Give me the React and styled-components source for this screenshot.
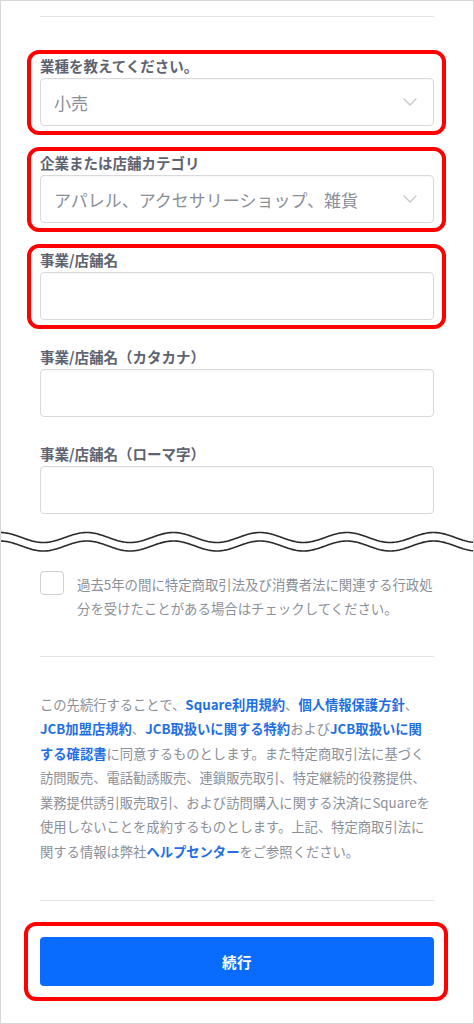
import React from "react";
import styled, { createGlobalStyle, css } from "styled-components";

const GlobalStyle = createGlobalStyle`
  html, body { margin: 0; padding: 0; background: #ffffff; }
  body {
    font-family: "Noto Sans CJK JP", "Noto Sans", "Liberation Sans", sans-serif;
    -webkit-font-smoothing: antialiased;
    text-autospace: no-autospace;
  }
  * { box-sizing: border-box; }
`;

const Frame = styled.div`
  width: 474px;
  height: 1024px;
  border: 1px solid #d6d6d6;
  padding: 0 39px;
  background: #fff;
  overflow: hidden;
  display: flex;
  flex-direction: column;
`;

const Divider = styled.hr`
  border: 0;
  height: 1px;
  background: #e3e3e6;
  margin: ${(p) => p.$mt}px 0 ${(p) => p.$mb}px;
`;

const Fields = styled.div`
  display: flex;
  flex-direction: column;
  gap: 27px;
`;

const highlight = css`
  &::after {
    content: "";
    position: absolute;
    pointer-events: none;
    border: 4px solid #ff0000;
    border-radius: 12px;
  }
`;

const Field = styled.div`
  position: relative;
  display: flex;
  flex-direction: column;
  gap: 2px;
  ${(p) =>
    p.$highlighted &&
    css`
      ${highlight}
      &::after {
        top: -6.5px;
        bottom: -9px;
        left: -13px;
        right: -12px;
      }
    `}
`;

const Label = styled.label`
  font-size: 14.5px;
  line-height: 20px;
  font-weight: 700;
  color: #5d6371;
  white-space: nowrap;
`;

const Box = styled.div`
  height: 48px;
  border: 1px solid #d9d9dc;
  border-radius: 4px;
  background: #fff;
  display: flex;
  align-items: center;
  justify-content: space-between;
  padding: 0 16px 0 13px;
  box-shadow: inset 0 1px 1px rgba(0, 0, 0, 0.03);
`;

const Value = styled.span`
  font-size: 17px;
  color: #8a8e97;
  white-space: nowrap;
`;

const Chevron = () => (
  <svg width="14" height="8" viewBox="0 0 14 8" fill="none">
    <polyline points="1,1 7,7 13,1" stroke="#c3c6cc" strokeWidth="1.3" strokeLinecap="round" strokeLinejoin="round" />
  </svg>
);

const WaveWrap = styled.div`
  margin: 11px -40px 0;
  height: 32px;
  position: relative;
  z-index: 1;
  svg { display: block; }
`;

function wavePoints(cy, amp, period, width, step) {
  const pts = [];
  for (let x = 0; x <= width; x += step) {
    pts.push([x, cy - amp * Math.cos((2 * Math.PI * x) / period)]);
  }
  return pts;
}

const Wave = () => {
  const w = 474;
  const top = wavePoints(12.5, 5, 86.7, w, 1);
  const bot = wavePoints(21, 5, 86.7, w, 1);
  const toD = (pts) => pts.map((p, i) => `${i ? "L" : "M"}${p[0].toFixed(1)} ${p[1].toFixed(2)}`).join(" ");
  const band =
    toD(top) +
    " " +
    bot
      .slice()
      .reverse()
      .map((p) => `L${p[0].toFixed(1)} ${p[1].toFixed(2)}`)
      .join(" ") +
    " Z";
  return (
    <svg width={w} height="32" viewBox={`0 0 ${w} 32`}>
      <path d={band} fill="#ffffff" />
      <path d={toD(top)} fill="none" stroke="#2b2b2b" strokeWidth="1.6" />
      <path d={toD(bot)} fill="none" stroke="#2b2b2b" strokeWidth="1.6" />
    </svg>
  );
};

const CheckRow = styled.div`
  display: flex;
  align-items: flex-start;
  gap: 13px;
  margin-top: 14px;
`;

const CheckBox = styled.span`
  flex: none;
  width: 24px;
  height: 24px;
  border: 1px solid #cfd1d6;
  border-radius: 4px;
  background: #fff;
`;

const CheckText = styled.p`
  margin: 2px 0 0;
  font-size: 13.4px;
  line-height: 23.5px;
  color: #8b8f98;
  white-space: nowrap;
`;

const Legal = styled.p`
  margin: 0;
  font-size: 13.3px;
  line-height: 24.5px;
  color: #8b8f98;
  white-space: nowrap;
`;

const Link = styled.a`
  color: #1f6fe3;
  font-weight: 700;
  text-decoration: none;
`;

const ButtonArea = styled.div`
  position: relative;
  ${highlight}
  &::after {
    top: -15.5px;
    bottom: -15px;
    left: -16px;
    right: -14px;
  }
`;

const PrimaryButton = styled.button`
  width: 100%;
  height: 48.5px;
  border: 0;
  border-radius: 4px;
  background: #0a6bff;
  color: #fff;
  font-family: inherit;
  font-size: 14.5px;
  font-weight: 700;
  letter-spacing: 0.5px;
  display: flex;
  align-items: center;
  justify-content: center;
`;

const fields = [
  { label: "業種を教えてください。", value: "小売", select: true, hl: true },
  { label: "企業または店舗カテゴリ", value: "アパレル、アクセサリーショップ、雑貨", select: true, hl: true },
  { label: "事業/店舗名", hl: true },
  { label: "事業/店舗名（カタカナ）" },
  { label: "事業/店舗名（ローマ字）" },
];

export default function App() {
  return (
    <>
      <GlobalStyle />
      <Frame>
        <Divider $mt={15} $mb={39.3} />
        <Fields>
          {fields.map((f) => (
            <Field key={f.label} $highlighted={f.hl}>
              <Label>{f.label}</Label>
              <Box>
                {f.value ? <Value>{f.value}</Value> : <span />}
                {f.select && <Chevron />}
              </Box>
            </Field>
          ))}
        </Fields>
        <WaveWrap>
          <Wave />
        </WaveWrap>
        <CheckRow>
          <CheckBox />
          <CheckText>
            過去5年の間に特定商取引法及び消費者法に関連する行政処
            <br />
            分を受けたことがある場合はチェックしてください。
          </CheckText>
        </CheckRow>
        <Divider $mt={36} $mb={35.7} />
        <Legal>
          この先続行することで、<Link>Square利用規約</Link>、<Link>個人情報保護方針</Link>、
          <br />
          <Link>JCB加盟店規約</Link>、<Link>JCB取扱いに関する特約</Link>および<Link>JCB取扱いに関</Link>
          <br />
          <Link>する確認書</Link>に同意するものとします。また特定商取引法に基づく
          <br />
          訪問販売、電話勧誘販売、連鎖販売取引、特定継続的役務提供、
          <br />
          業務提供誘引販売取引、および訪問購入に関する決済にSquareを
          <br />
          使用しないことを成約するものとします。上記、特定商取引法に
          <br />
          関する情報は弊社<Link>ヘルプセンター</Link>をご参照ください。
        </Legal>
        <Divider $mt={35.7} $mb={36.3} />
        <ButtonArea>
          <PrimaryButton>続行</PrimaryButton>
        </ButtonArea>
      </Frame>
    </>
  );
}
